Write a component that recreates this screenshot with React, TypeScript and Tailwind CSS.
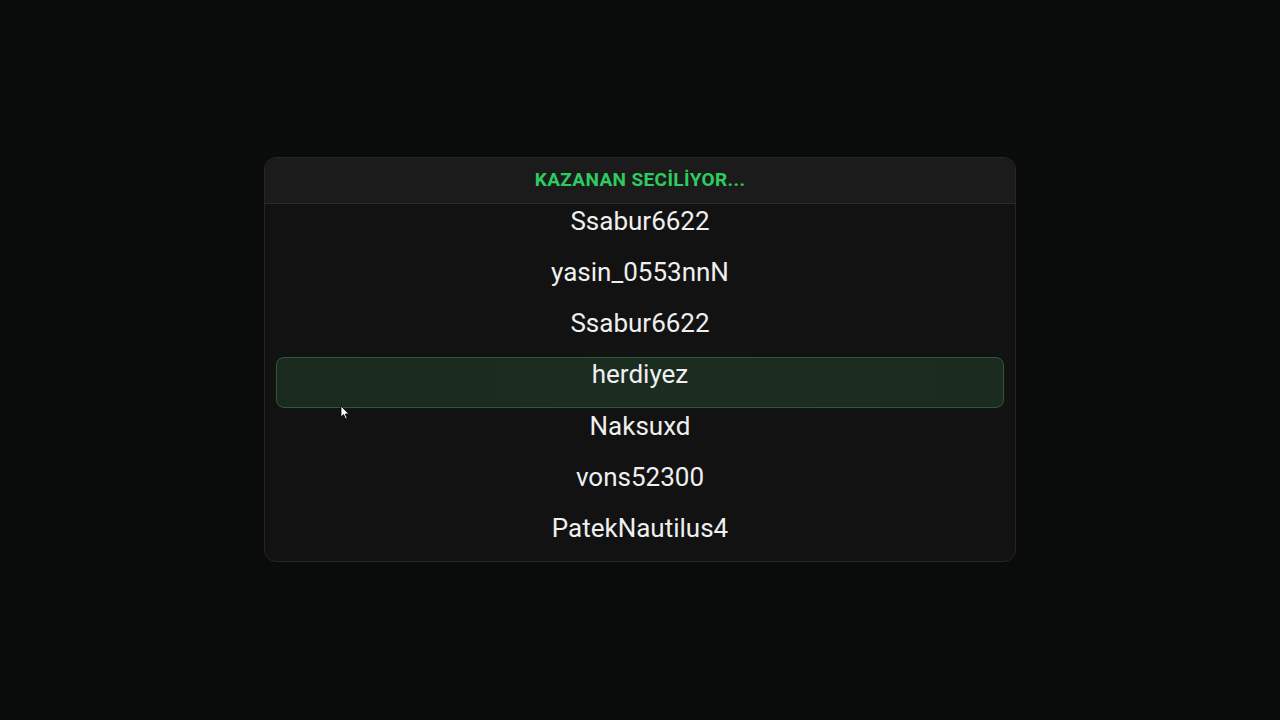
import React from 'react';

const names = ['Ssabur6622', 'yasin_0553nnN', 'Ssabur6622', 'herdiyez', 'Naksuxd', 'vons52300', 'PatekNautilus4'];

function Cursor() {
    return (
        <svg width="10" height="15" viewBox="0 0 10 15" className="absolute left-[340px] top-[405px]">
            <path d="M1 1 L1 12 L3.6 9.6 L5.6 14 L7.2 13.3 L5.3 9 L8.8 9 Z" fill="#fff" stroke="#000" strokeWidth="0.8" />
        </svg>
    );
}

export default function App() {
    return (
        <div
            className="relative min-h-screen h-[720px] bg-[#0a0b0b] flex items-start justify-center pt-[157px]"
            style={{ fontFamily: 'Roboto, "Liberation Sans", sans-serif' }}
        >
            <div className="w-[752px] h-[405px] rounded-[12px] border border-[#262626] bg-[#121212] overflow-hidden flex flex-col">
                <div className="h-[46px] shrink-0 bg-[#1b1b1b] border-b border-[#2c2c2c] flex items-center justify-center">
                    <span className="text-[19px] font-bold tracking-[0.02em] text-[#2ecc60]">KAZANAN SECİLİYOR...</span>
                </div>
                <div className="flex flex-col px-[11px] -mt-[9px]">
                    {names.map((n, i) =>
                        i === 3 ? (
                            <div
                                key={i}
                                className="h-[51px] mt-[8px] -mb-[8px] rounded-[8px] border border-[#2b5a3b] bg-gradient-to-r from-[#1a2a1f] via-[#1b2c21] to-[#1b2b20] flex justify-center"
                            >
                                <span className="text-[26px] leading-[32px] text-[#efefef]">{n}</span>
                            </div>
                        ) : (
                            <div key={i} className="h-[51.3px] flex items-center justify-center">
                                <span className="text-[26px] leading-[32px] text-[#efefef]">{n}</span>
                            </div>
                        )
                    )}
                </div>
            </div>
            <Cursor />
        </div>
    );
}
